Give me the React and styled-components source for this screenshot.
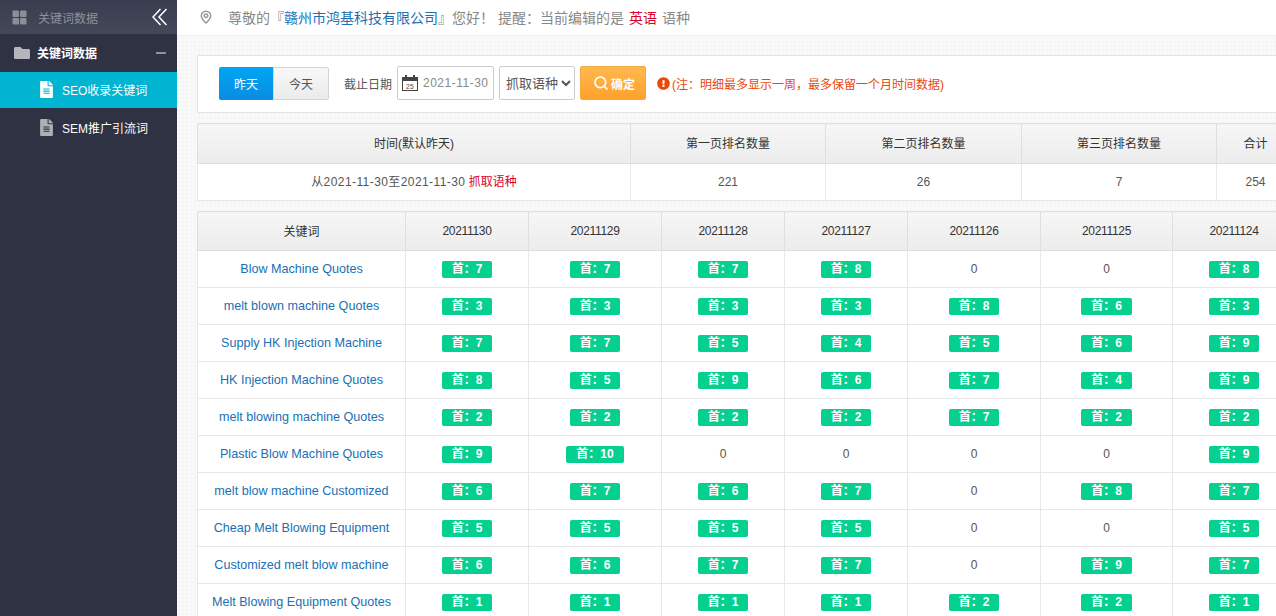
import React from 'react';
import styled, { createGlobalStyle } from 'styled-components';
import { FaFolder, FaFileAlt, FaExclamationCircle } from 'react-icons/fa';
import { MapPin, Search } from 'lucide-react';

const GlobalStyle = createGlobalStyle`
  html, body {
    margin: 0;
    padding: 0;
    height: 100%;
    overflow: hidden;
    font-family: "Liberation Sans", "Noto Sans CJK SC", sans-serif;
    font-size: 12px;
    color: #555;
  }
`;

const Page = styled.div`
  display: flex;
  width: 1276px;
  height: 616px;
  overflow: hidden;
`;

const Sidebar = styled.aside`
  flex: 0 0 177px;
  background: #2f3242;
`;

const SideHead = styled.div`
  height: 34px;
  display: flex;
  align-items: center;
  padding: 0 10px 0 12px;
  background: linear-gradient(#3a3d4f, #454859);
  color: #8f919c;
  font-size: 12px;
  span { margin-left: 11px; flex: 1; }
`;

const SideGroup = styled.div`
  height: 38px;
  display: flex;
  align-items: center;
  padding: 0 11px 1px 14px;
  box-sizing: border-box;
  color: #fff;
  font-size: 12px;
  font-weight: bold;
  svg { color: #b5b6bd; }
  span { margin-left: 7px; flex: 1; }
`;

const Minus = styled.i`
  width: 10px;
  height: 2px;
  background: #8f919c;
`;

const SideItem = styled.div`
  height: 36px;
  box-sizing: border-box;
  display: flex;
  align-items: center;
  padding: 0 0 2px 38px;
  margin-bottom: 2px;
  background: ${p => (p.$active ? '#00b4d2' : 'transparent')};
  color: #fff;
  font-size: 12px;
  svg { color: ${p => (p.$active ? '#fff' : '#aeb0b8')}; }
  span { margin-left: 7px; }
`;

const Main = styled.main`
  flex: 1;
  min-width: 0;
  background: #f9f9f9 radial-gradient(#f4f4f4 1px, transparent 1px) 0 0 / 4px 4px;
`;

const TopBar = styled.div`
  height: 33px;
  display: flex;
  align-items: center;
  padding: 0 0 2px 22px;
  background: #fff;
  border-bottom: 1px solid #eee;
  color: #888;
  font-size: 14px;
  svg { color: #999; margin-right: 15px; }
`;

const Company = styled.b`
  font-weight: normal;
  color: #1a6fb5;
`;

const Lang = styled.b`
  font-weight: normal;
  color: #d8032a;
  margin: 0 5px;
`;

const Content = styled.div`
  width: 1098px;
  padding: 19px 0 0 20px;
`;

const Filter = styled.div`
  height: 54px;
  display: flex;
  align-items: center;
  padding: 0 0 2px 21px;
  background: #fff;
  border: 1px solid #e3e3e3;
  margin-bottom: 10px;
`;

const Tab = styled.div`
  width: ${p => (p.$active ? '54px' : '56px')};
  height: 33px;
  display: flex;
  align-items: center;
  justify-content: center;
  font-size: 12px;
  border-radius: ${p => (p.$active ? '2px 0 0 2px' : '0 2px 2px 0')};
  background: ${p => (p.$active ? 'linear-gradient(#00a6f2, #0a8ce2)' : 'linear-gradient(#f8f8f8, #ebebeb)')};
  border: ${p => (p.$active ? '0' : '1px solid #d4d4d4')};
  box-sizing: border-box;
  color: ${p => (p.$active ? '#fff' : '#555')};
`;

const DateLabel = styled.label`
  margin: 0 5px 0 15px;
  color: #555;
`;

const DateBox = styled.div`
  width: 97px;
  height: 34px;
  box-sizing: border-box;
  display: flex;
  align-items: center;
  padding-left: 4px;
  gap: 5px;
  background: #fff;
  border: 1px solid #ccc;
  border-radius: 2px;
  color: #888;
  letter-spacing: 0.5px;
`;

const LangSelect = styled.select`
  width: 76px;
  height: 34px;
  margin: 0 5px;
  padding: 0 0 0 2px;
  background: #fff;
  border: 1px solid #ccc;
  border-radius: 2px;
  color: #555;
  font: 13px "Liberation Sans", "Noto Sans CJK SC", sans-serif;
`;

const Confirm = styled.button`
  width: 66px;
  height: 34px;
  display: flex;
  align-items: center;
  justify-content: center;
  gap: 2px;
  padding: 0 0 0 2px;
  background: linear-gradient(#ffb950, #ffa02c);
  border: 1px solid #f4a93e;
  border-radius: 2px;
  color: #fff;
  font: bold 12px "Liberation Sans", "Noto Sans CJK SC", sans-serif;
`;

const Note = styled.div`
  display: flex;
  align-items: center;
  margin-left: 11px;
  color: #e8480c;
  svg { margin-right: 2px; }
`;

const Table = styled.table`
  border-collapse: collapse;
  table-layout: fixed;
  width: 100%;
  background: #fff;
  margin-bottom: 10px;
`;

const Th = styled.th`
  height: ${p => p.$h}px;
  width: ${p => (p.$w ? `${p.$w}px` : 'auto')};
  padding: 0 0 ${p => (p.$date ? 0 : 2)}px;
  box-sizing: border-box;
  background: linear-gradient(#f6f6f6, #ececec);
  border: 1px solid #dfdfdf;
  color: #333;
  font-size: 12px;
  font-weight: normal;
  letter-spacing: ${p => (p.$date ? '-0.3px' : 'normal')};
  text-align: center;
`;

const Td = styled.td`
  height: 37px;
  padding: 0 0 ${p => (p.$cjk ? 3 : 0)}px;
  box-sizing: border-box;
  border: 1px solid #e8e8e8;
  color: #555;
  font-size: 12px;
  text-align: center;
`;

const Range = styled.span`
  letter-spacing: 0.42px;
`;

const Keyword = styled.a`
  color: #1a6fb5;
  font-size: 12.6px;
`;

const Red = styled.span`
  color: #d8032a;
`;

const Badge = styled.span`
  display: inline-block;
  height: 17px;
  line-height: 17px;
  padding: 0 10px;
  background: #06d08f;
  border-radius: 2px;
  color: #fff;
  font-size: 12px;
  font-weight: bold;
`;

const GridIcon = () => (
  <svg width="15" height="15" viewBox="0 0 15 15" fill="#8b8d98">
    <rect x="0.5" y="0.5" width="6.5" height="6.5" rx="1" />
    <rect x="8" y="0.5" width="6.5" height="6.5" rx="1" />
    <rect x="0.5" y="8" width="6.5" height="6.5" rx="1" />
    <rect x="8" y="8" width="6.5" height="6.5" rx="1" />
  </svg>
);

const CollapseIcon = () => (
  <svg width="15" height="18" viewBox="0 0 15 18" fill="none" stroke="#fff" strokeWidth="1.5">
    <polyline points="8.5,1 1,9 8.5,17" />
    <polyline points="14.5,1 7,9 14.5,17" />
  </svg>
);

const CalendarIcon = () => (
  <svg width="16" height="16" viewBox="0 0 16 16">
    <rect x="0.5" y="2.5" width="15" height="13" fill="none" stroke="#444" />
    <rect x="0.5" y="2.5" width="15" height="3.5" fill="#444" />
    <rect x="3" y="0" width="2" height="4" fill="#444" />
    <rect x="11" y="0" width="2" height="4" fill="#444" />
    <text x="8" y="13.5" fontSize="6.5" textAnchor="middle" fill="#444">25</text>
  </svg>
);

const dates = ['20211130', '20211129', '20211128', '20211127', '20211126', '20211125', '20211124'];
const dateWidths = [123, 133, 123, 123, 133, 132, 123];

const rows = [
  ['Blow Machine Quotes', 7, 7, 7, 8, 0, 0, 8],
  ['melt blown machine Quotes', 3, 3, 3, 3, 8, 6, 3],
  ['Supply HK Injection Machine', 7, 7, 5, 4, 5, 6, 9],
  ['HK Injection Machine Quotes', 8, 5, 9, 6, 7, 4, 9],
  ['melt blowing machine Quotes', 2, 2, 2, 2, 7, 2, 2],
  ['Plastic Blow Machine Quotes', 9, 10, 0, 0, 0, 0, 9],
  ['melt blow machine Customized', 6, 7, 6, 7, 0, 8, 7],
  ['Cheap Melt Blowing Equipment', 5, 5, 5, 5, 0, 0, 5],
  ['Customized melt blow machine', 6, 6, 7, 7, 0, 9, 7],
  ['Melt Blowing Equipment Quotes', 1, 1, 1, 1, 2, 2, 1],
];

export default function App() {
  return (
    <Page>
      <GlobalStyle />
      <Sidebar>
        <SideHead>
          <GridIcon />
          <span>关键词数据</span>
          <CollapseIcon />
        </SideHead>
        <SideGroup>
          <FaFolder size={16} />
          <span>关键词数据</span>
          <Minus />
        </SideGroup>
        <SideItem $active>
          <FaFileAlt size={17} />
          <span>SEO收录关键词</span>
        </SideItem>
        <SideItem>
          <FaFileAlt size={17} />
          <span>SEM推广引流词</span>
        </SideItem>
      </Sidebar>
      <Main>
        <TopBar>
          <MapPin size={14} strokeWidth={2.6} />
          尊敬的『<Company>赣州市鸿基科技有限公司</Company>』您好！ 提醒：当前编辑的是 <Lang>英语</Lang> 语种
        </TopBar>
        <Content>
          <Filter>
            <Tab $active>昨天</Tab>
            <Tab>今天</Tab>
            <DateLabel>截止日期</DateLabel>
            <DateBox>
              <CalendarIcon />
              2021-11-30
            </DateBox>
            <LangSelect defaultValue="抓取语种">
              <option>抓取语种</option>
            </LangSelect>
            <Confirm>
              <Search size={16} strokeWidth={2.5} />
              确定
            </Confirm>
            <Note>
              <FaExclamationCircle size={13} />
              (注：明细最多显示一周，最多保留一个月时间数据)
            </Note>
          </Filter>
          <Table>
            <thead>
              <tr>
                <Th $h={40} $w={433}>时间(默认昨天)</Th>
                <Th $h={40} $w={195}>第一页排名数量</Th>
                <Th $h={40} $w={196}>第二页排名数量</Th>
                <Th $h={40} $w={195}>第三页排名数量</Th>
                <Th $h={40}>合计</Th>
              </tr>
            </thead>
            <tbody>
              <tr>
                <Td $cjk><Range>从2021-11-30至2021-11-30</Range> <Red>抓取语种</Red></Td>
                <Td>221</Td>
                <Td>26</Td>
                <Td>7</Td>
                <Td>254</Td>
              </tr>
            </tbody>
          </Table>
          <Table>
            <thead>
              <tr>
                <Th $h={39} $w={208}>关键词</Th>
                {dates.map((d, i) => (
                  <Th key={d} $h={39} $w={dateWidths[i]} $date>{d}</Th>
                ))}
              </tr>
            </thead>
            <tbody>
              {rows.map(([name, ...vals]) => (
                <tr key={name}>
                  <Td><Keyword>{name}</Keyword></Td>
                  {vals.map((v, i) => (
                    <Td key={i}>{v ? <Badge>首：{v}</Badge> : 0}</Td>
                  ))}
                </tr>
              ))}
            </tbody>
          </Table>
        </Content>
      </Main>
    </Page>
  );
}
